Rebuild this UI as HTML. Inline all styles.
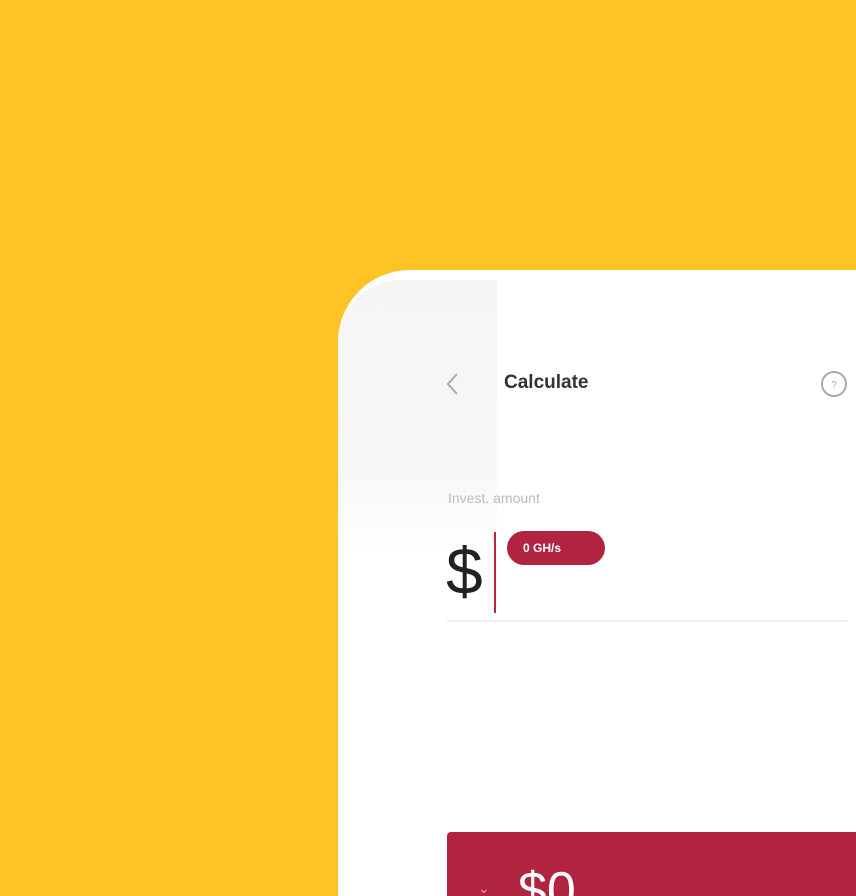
<!DOCTYPE html>
<html><head><meta charset="utf-8"><style>
html,body{margin:0;padding:0;width:856px;height:896px;overflow:hidden}
body{background:#fec425;position:relative;font-family:"Liberation Sans",sans-serif}
.card{position:absolute;left:338px;top:270px;width:560px;height:626px;background:#fff;border-top-left-radius:72px}
.shade{position:absolute;left:338px;top:280px;width:159px;height:270px;background:linear-gradient(#f6f5f5,#f8f7f7 70%,rgba(255,255,255,0));border-top-left-radius:64px}
.t{position:absolute;white-space:nowrap}
</style></head><body>
<div class="card"></div>
<div class="shade"></div>
<svg class="t" style="left:444px;top:372px" width="16" height="24" viewBox="0 0 16 24"><path d="M13 2 L4 12 L13 22" fill="none" stroke="#aaa" stroke-width="2"/></svg>
<div class="t" style="left:504px;top:372px;font-size:19px;font-weight:bold;color:#333">Calculate</div>
<svg class="t" style="left:820px;top:370px" width="28" height="28" viewBox="0 0 28 28"><circle cx="14" cy="14" r="12" fill="none" stroke="#aaa" stroke-width="2"/><text x="14" y="18" font-size="10" text-anchor="middle" fill="#aaa" font-family="Liberation Sans">?</text></svg>
<div class="t" style="left:448px;top:490px;font-size:14px;color:#bbb">Invest. amount</div>
<div class="t" style="left:446px;top:533px;font-size:66px;color:#222;line-height:76px">$</div>
<div class="t" style="left:494px;top:532px;width:2px;height:81px;background:#b52a3a"></div>
<div class="t" style="left:507px;top:531px;width:98px;height:34px;border-radius:17px;background:#b0243f;color:#fff;font-size:12px;font-weight:bold;line-height:34px;text-indent:16px">0 GH/s</div>
<div class="t" style="left:447px;top:620px;width:400px;height:2px;background:#eee"></div>
<div class="t" style="left:447px;top:832px;width:420px;height:80px;background:#b0243f;border-top-left-radius:4px"></div>
<div class="t" style="left:518px;top:856px;font-size:52px;color:#fff;line-height:70px">$0</div>
<div class="t" style="left:478px;top:880px;font-size:14px;color:#e8a0ad">⌄</div>
</body></html>
